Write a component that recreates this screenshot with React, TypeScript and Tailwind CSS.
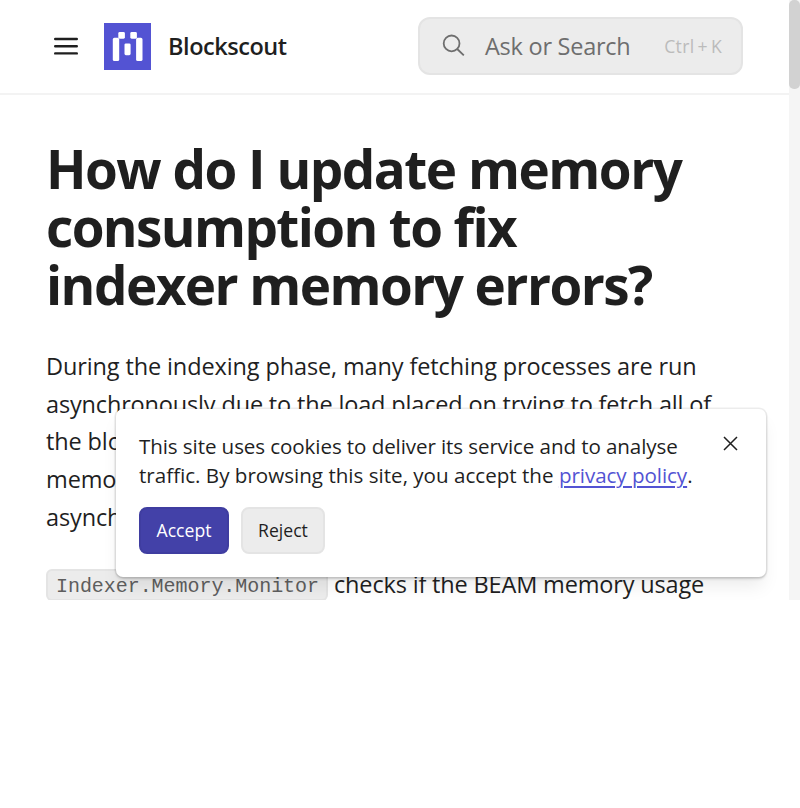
import React from "react";

function Logo() {
  return (
    <svg className="h-[47px] w-[47px] shrink-0" viewBox="0 0 47 47">
      <rect width="47" height="47" fill="#5353d3" />
      <g fill="#fff">
        <rect x="8.8" y="14.8" width="6.4" height="23.2" rx="1.6" />
        <rect x="32.1" y="14.8" width="6.4" height="23.2" rx="1.6" />
        <rect x="14.3" y="9" width="6.6" height="6.7" rx="1.4" />
        <rect x="26.3" y="9" width="6.6" height="6.7" rx="1.4" />
        <rect x="20.5" y="20.4" width="6.1" height="11.8" rx="1.4" />
      </g>
    </svg>
  );
}

function Header() {
  return (
    <header className="flex h-[95px] shrink-0 items-center border-b-2 border-[#f3f3f3] pb-px pl-[54px] pr-[46px]">
      <svg className="h-6 w-6 shrink-0" viewBox="0 0 24 24" fill="none" stroke="#1f1f1f" strokeWidth="2.4" strokeLinecap="round">
        <path d="M1.2 5H22.8M1.2 12.3H22.8M1.2 19.4H22.8" />
      </svg>
      <div className="ml-[26px] flex items-center gap-[17px]">
        <Logo />
        <span className="pt-0.5 text-[23.5px] font-semibold tracking-[-0.45px]">Blockscout</span>
      </div>
      <div className="ml-auto flex h-[58px] w-[325px] items-center rounded-xl border-2 border-[#e4e4e4] bg-[#ececec] pl-[22px] pr-[19px]">
        <svg className="h-6 w-6 shrink-0" viewBox="0 0 24 24" fill="none" stroke="#6e6e6e" strokeWidth="1.8">
          <circle cx="9.6" cy="9.4" r="7.9" />
          <path d="M15.2 15L21.8 21.4" />
        </svg>
        <span className="ml-[19px] whitespace-nowrap pt-0.5 text-[23.5px] tracking-[-0.25px] text-[#6e6e6e]">Ask or Search</span>
        <span className="ml-auto whitespace-nowrap text-[17.6px] tracking-[0.3px] text-[#bbbbbb] [word-spacing:-1.8px]">Ctrl + K</span>
      </div>
    </header>
  );
}

function CookieBanner() {
  return (
    <div className="absolute left-[116px] top-[409px] flex h-[168px] w-[650px] flex-col rounded-[7px] bg-white pl-[23px] pt-[23px] shadow-[0_0_0_1.5px_rgba(0,0,0,0.07),0_2px_3px_rgba(0,0,0,0.14),0_12px_18px_-3px_rgba(0,0,0,0.08)]">
      <p className="whitespace-nowrap text-[20.6px] leading-[29.3px]">
        <span className="tracking-[-0.1px]">This site uses cookies to deliver its service and to analyse</span>
        <br />
        <span>
          traffic. By browsing this site, you accept the{" "}
          <a className="tracking-[-0.06px] text-[#5353d3] underline decoration-2 underline-offset-[3px]">privacy policy</a>.
        </span>
      </p>
      <div className="mt-4 flex gap-3">
        <button className="h-[47px] w-[90px] rounded-lg border-2 border-[#3f3da0] bg-[#4341a8] text-[17.6px] text-white">Accept</button>
        <button className="h-[47px] w-[84px] rounded-lg border-2 border-[#e4e4e4] bg-[#ececec] text-[17.6px]">Reject</button>
      </div>
      <svg className="absolute right-7 top-[27px] h-[15px] w-[15px]" viewBox="0 0 15 15" fill="none" stroke="#1f1f1f" strokeWidth="1.5">
        <path d="M1 1L14 14M14 1L1 14" />
      </svg>
    </div>
  );
}

export default function App() {
  return (
    <div className="h-[808px] w-[800px] overflow-hidden bg-white font-['Open_Sans',sans-serif] text-[#1f1f1f]">
      <div className="relative flex h-[600px] overflow-hidden">
        <div className="flex w-[789px] flex-col">
          <Header />
          <main className="pl-[46px] pt-[45px]">
            <h1 className="whitespace-nowrap text-[53px] font-bold leading-[58px] tracking-[-1.55px]">
              <span className="tracking-[-1.5px]">How do I update memory</span>
              <br />
              <span className="tracking-[-1.62px]">consumption to fix</span>
              <br />
              indexer memory errors?
            </h1>
            <p className="mt-[34px] whitespace-nowrap text-[23.5px] leading-[37.7px] tracking-[-0.12px]">
              During the indexing phase, many fetching processes are run
              <br />
              <span className="tracking-[-0.16px]">asynchronously due to the load placed on trying to fetch all of</span>
              <br />
              the block data. This can lead to high
              <br />
              memory consumption by the
              <br />
              asynchronous fetchers.
            </p>
            <p className="mt-[29.5px] flex items-start gap-[6px] whitespace-nowrap text-[23.5px] leading-[37.6px] tracking-[-0.16px]">
              <code className="mt-[3px] h-8 w-[282px] rounded-md border-2 border-[#e4e4e4] bg-[#ececec] px-2 pt-0.5 font-['Liberation_Mono',monospace] text-[20px] leading-7 tracking-[-0.05px] text-[#5e5e5e]">
                Indexer.Memory.Monitor
              </code>
              <span>checks if the BEAM memory usage</span>
            </p>
          </main>
        </div>
        <CookieBanner />
        <div className="relative w-[11px] bg-[#f5f5f5]">
          <div className="h-[89px] rounded-[5px] bg-[#d2d2d2]" />
        </div>
      </div>
    </div>
  );
}
